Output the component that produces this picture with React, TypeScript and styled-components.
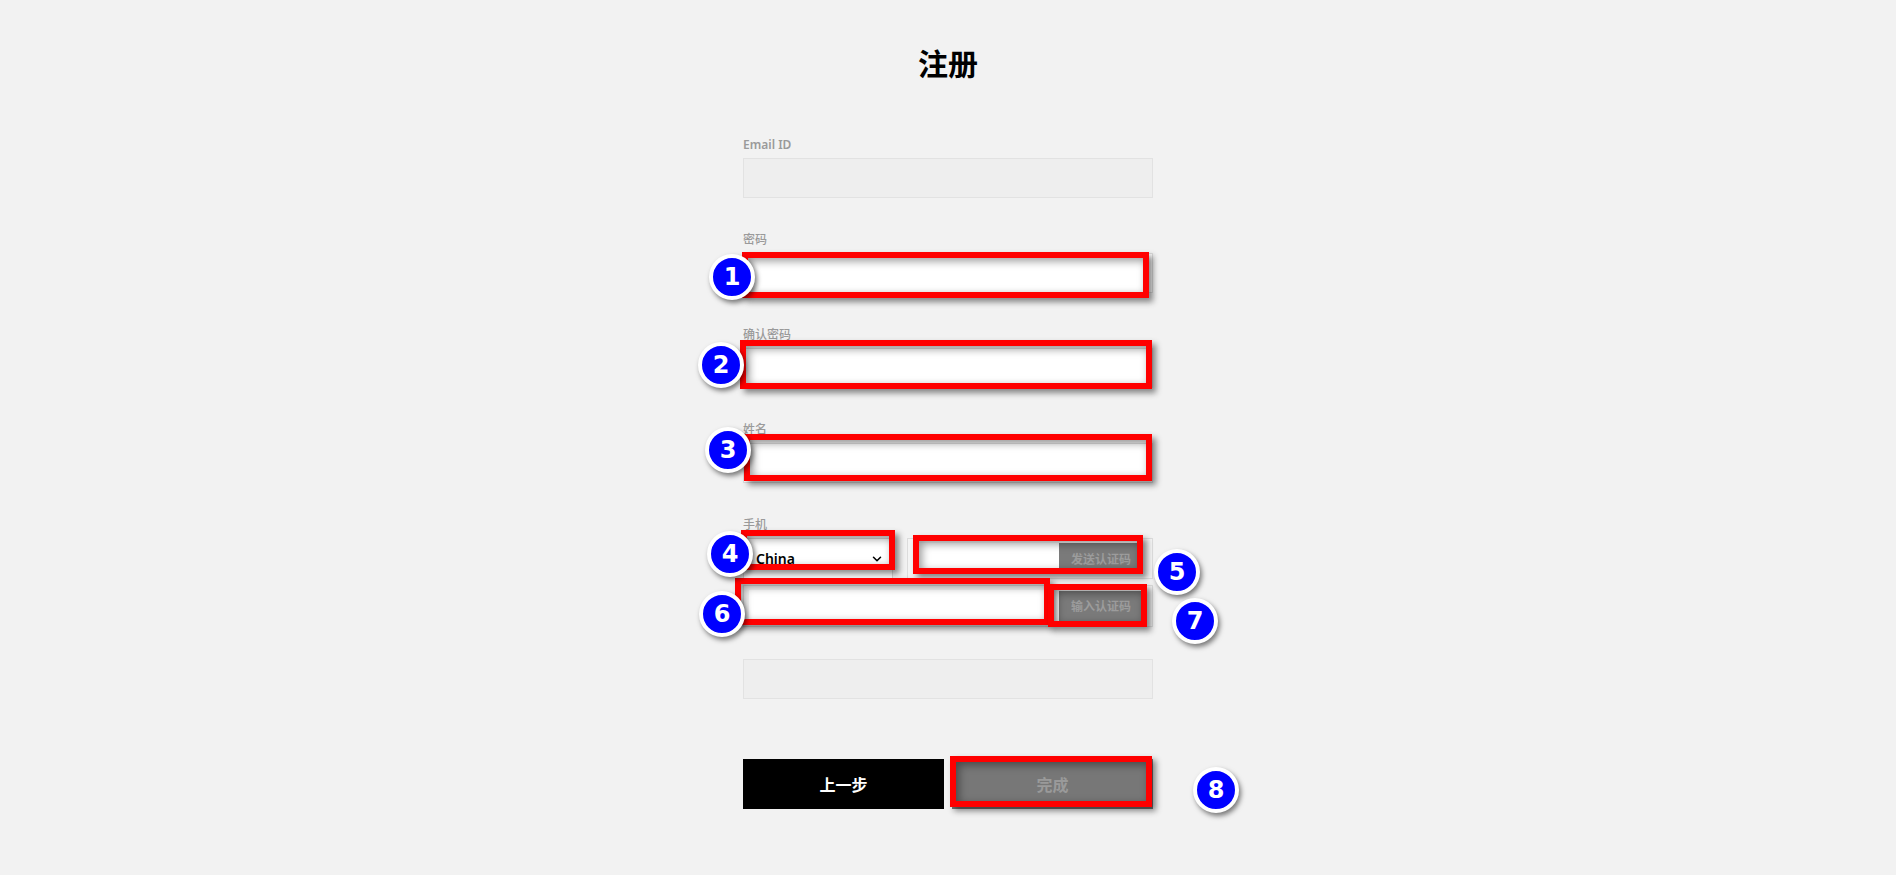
import React from "react";
import styled, { createGlobalStyle } from "styled-components";
import { ChevronDown } from "lucide-react";

const COL_LEFT = 743;

const GlobalStyle = createGlobalStyle`
  html, body {
    margin: 0;
    padding: 0;
    background: #f2f2f2;
  }
  body {
    font-family: "Noto Sans", "Noto Sans CJK SC", sans-serif;
    color: #000;
  }
  * { box-sizing: border-box; }
`;

const Page = styled.div`
  width: 100%;
  min-height: 875px;
  background: #f2f2f2;
`;

const Column = styled.div`
  position: relative;
  width: 410px;
  margin: 0 auto;
  padding-top: 44px;
  padding-bottom: 40px;
`;

const Title = styled.h1`
  margin: 0 0 52px;
  height: 40px;
  font-size: 30px;
  line-height: 40px;
  font-weight: 700;
  text-align: center;
  font-family: "Noto Sans", "Noto Sans CJK SC", sans-serif;
`;

const Field = styled.div<{ $mb?: number }>`
  display: flex;
  flex-direction: column;
  gap: 4px;
  margin-bottom: ${(p) => (p.$mb ?? 33)}px;
`;

const Label = styled.label<{ $latin?: boolean }>`
  display: block;
  font-size: 12px;
  line-height: 18px;
  font-weight: ${(p) => (p.$latin ? 600 : 500)};
  color: #9a9a9a;
`;

const TextInput = styled.div<{ $disabled?: boolean }>`
  height: 40px;
  width: 100%;
  background: ${(p) => (p.$disabled ? "#eeeeee" : "#ffffff")};
  border: 1px solid ${(p) => (p.$disabled ? "#e2e2e2" : "#dddddd")};
`;

const PhoneRow = styled.div`
  display: flex;
  gap: 14px;
  height: 41px;
`;

const SelectBox = styled.div`
  width: 150px;
  height: 100%;
  display: flex;
  align-items: center;
  justify-content: space-between;
  padding: 0 8px 0 12px;
  background: #ffffff;
  border: 1px solid #d8d8d8;
  font-size: 14px;
  font-weight: 600;
  color: #000;
`;

const InputGroup = styled.div`
  flex: 1;
  display: flex;
  align-items: center;
  height: 100%;
  padding: 4px 9px 4px 5px;
  border: 1px solid #dcdcdc;
  background: #f4f4f4;
`;

const InnerInput = styled.div`
  flex: 1;
  height: 100%;
  background: #ffffff;
`;

const GrayButton = styled.button`
  width: 84px;
  height: 31px;
  border: none;
  padding: 0;
  background: #7a7a7a;
  color: #9c9c9c;
  font-family: "Noto Sans", "Noto Sans CJK SC", sans-serif;
  font-size: 12px;
  font-weight: 700;
  cursor: pointer;
`;

const CodeRow = styled.div`
  display: flex;
  height: 42px;
  margin-top: 6px;
`;

const ExtraInput = styled(TextInput)`
  margin-top: 32px;
`;

const ButtonRow = styled.div`
  display: flex;
  gap: 8px;
  margin-top: 60px;
`;

const ActionButton = styled.button<{ $primary?: boolean }>`
  flex: 1;
  height: 50px;
  border: none;
  background: ${(p) => (p.$primary ? "#000000" : "#777777")};
  color: ${(p) => (p.$primary ? "#ffffff" : "#9a9a9a")};
  font-family: "Noto Sans", "Noto Sans CJK SC", sans-serif;
  font-size: 16px;
  font-weight: 700;
  cursor: pointer;
`;

/* ---------- annotation overlay ---------- */

const RedBox = styled.div<{ $x: number; $y: number; $w: number; $h: number }>`
  position: absolute;
  left: ${(p) => p.$x - COL_LEFT}px;
  top: ${(p) => p.$y}px;
  width: ${(p) => p.$w}px;
  height: ${(p) => p.$h}px;
  border: 6px solid #ff0000;
  box-shadow: 4px 4px 6px rgba(0, 0, 0, 0.45),
    inset 3px 3px 8px rgba(0, 0, 0, 0.4);
  pointer-events: none;
`;

const Badge = styled.div<{ $cx: number; $cy: number }>`
  position: absolute;
  left: ${(p) => p.$cx - COL_LEFT - 23}px;
  top: ${(p) => p.$cy - 23}px;
  width: 46px;
  height: 46px;
  border-radius: 50%;
  background: #0000ff;
  border: 4px solid #ffffff;
  box-shadow: 2px 3px 5px rgba(0, 0, 0, 0.5);
  display: flex;
  align-items: center;
  justify-content: center;
  color: #ffffff;
  font-family: "DejaVu Sans", "Liberation Sans", sans-serif;
  font-weight: 700;
  font-size: 24px;
  line-height: 1;
  pointer-events: none;
`;

const boxes = [
  { x: 742, y: 252, w: 407, h: 46 },
  { x: 740, y: 340, w: 412, h: 49 },
  { x: 744, y: 434, w: 408, h: 47 },
  { x: 741, y: 530, w: 154, h: 40 },
  { x: 913, y: 535, w: 230, h: 39 },
  { x: 735, y: 578, w: 315, h: 47 },
  { x: 1048, y: 584, w: 99, h: 43 },
  { x: 950, y: 756, w: 202, h: 51 },
];

const badges = [
  { n: 1, cx: 732, cy: 277 },
  { n: 2, cx: 721, cy: 365 },
  { n: 3, cx: 728, cy: 450 },
  { n: 4, cx: 730, cy: 554 },
  { n: 5, cx: 1177, cy: 572 },
  { n: 6, cx: 722, cy: 614 },
  { n: 7, cx: 1195, cy: 621 },
  { n: 8, cx: 1216, cy: 790 },
];

export default function App() {
  return (
    <>
      <GlobalStyle />
      <Page>
        <Column>
          <Title>注册</Title>

          <Field>
            <Label $latin>Email ID</Label>
            <TextInput $disabled />
          </Field>

          <Field>
            <Label>密码</Label>
            <TextInput />
          </Field>

          <Field>
            <Label>确认密码</Label>
            <TextInput />
          </Field>

          <Field>
            <Label>姓名</Label>
            <TextInput />
          </Field>

          <Field $mb={0}>
            <Label>手机</Label>
            <PhoneRow>
              <SelectBox>
                <span>China</span>
                <ChevronDown size={14} strokeWidth={2.6} color="#000" />
              </SelectBox>
              <InputGroup>
                <InnerInput />
                <GrayButton>发送认证码</GrayButton>
              </InputGroup>
            </PhoneRow>
          </Field>

          <CodeRow>
            <InputGroup>
              <InnerInput />
              <GrayButton>输入认证码</GrayButton>
            </InputGroup>
          </CodeRow>

          <ExtraInput $disabled />

          <ButtonRow>
            <ActionButton $primary>上一步</ActionButton>
            <ActionButton>完成</ActionButton>
          </ButtonRow>

          {boxes.map((b, i) => (
            <RedBox key={i} $x={b.x} $y={b.y} $w={b.w} $h={b.h} />
          ))}
          {badges.map((b) => (
            <Badge key={b.n} $cx={b.cx} $cy={b.cy}>
              {b.n}
            </Badge>
          ))}
        </Column>
      </Page>
    </>
  );
}
